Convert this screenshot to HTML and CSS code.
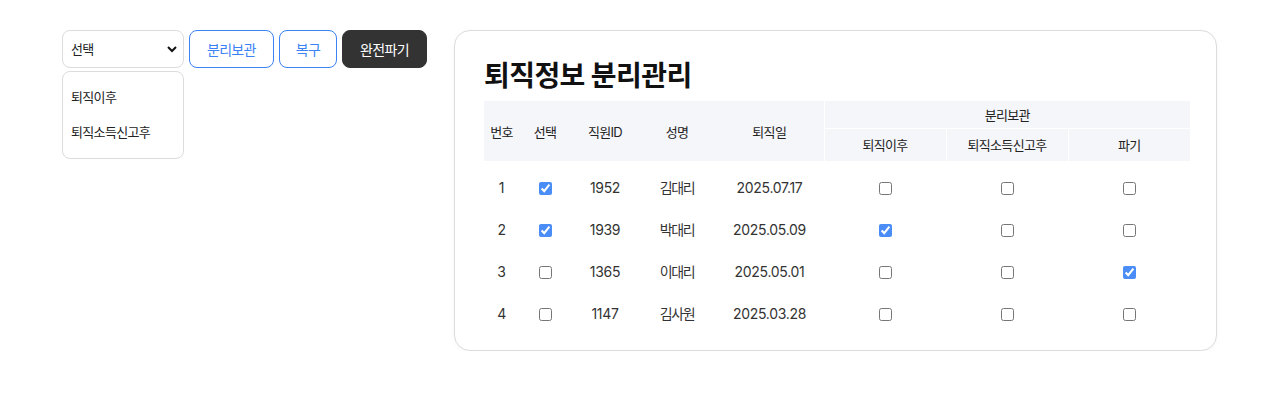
FILE: index.html
```html
<!DOCTYPE html>
<html lang="ko">
<head>
<meta charset="utf-8">
<title>퇴직정보 분리관리</title>
<link rel="stylesheet" href="styles.css">
</head>
<body>
<div class="page">
  <div class="controls">
    <div class="toolbar">
      <div class="select-wrap">
        <select class="select">
          <option>선택</option>
          <option>퇴직이후</option>
          <option>퇴직소득신고후</option>
        </select>
        <svg class="chev" width="12" height="8" viewBox="0 0 12 8"><path d="M2 2 L6 6 L10 2" fill="none" stroke="#111" stroke-width="2"/></svg>
      </div>
      <button class="btn btn-outline">분리보관</button>
      <button class="btn btn-outline btn-sm">복구</button>
      <button class="btn btn-dark">완전파기</button>
    </div>
    <ul class="menu">
      <li>퇴직이후</li>
      <li>퇴직소득신고후</li>
    </ul>
  </div>

  <div class="card">
    <h1 class="title">퇴직정보 분리관리</h1>
    <table class="tbl">
      <colgroup>
        <col style="width:35px"><col style="width:52px"><col style="width:68px"><col style="width:76px"><col style="width:109px"><col style="width:122px"><col style="width:122px"><col style="width:122px">
      </colgroup>
      <thead>
        <tr class="h1row">
          <th rowspan="2">번호</th>
          <th rowspan="2">선택</th>
          <th rowspan="2">직원ID</th>
          <th rowspan="2">성명</th>
          <th rowspan="2">퇴직일</th>
          <th colspan="3" class="grp">분리보관</th>
        </tr>
        <tr class="h2row">
          <th class="sub">퇴직이후</th>
          <th class="sub">퇴직소득신고후</th>
          <th class="sub">파기</th>
        </tr>
      </thead>
      <tbody>
        <tr>
          <td class="num">1</td>
          <td><input type="checkbox" checked></td>
          <td class="num">1952</td>
          <td>김대리</td>
          <td class="num">2025.07.17</td>
          <td><input type="checkbox"></td>
          <td><input type="checkbox"></td>
          <td><input type="checkbox"></td>
        </tr>
        <tr>
          <td class="num">2</td>
          <td><input type="checkbox" checked></td>
          <td class="num">1939</td>
          <td>박대리</td>
          <td class="num">2025.05.09</td>
          <td><input type="checkbox" checked></td>
          <td><input type="checkbox"></td>
          <td><input type="checkbox"></td>
        </tr>
        <tr>
          <td class="num">3</td>
          <td><input type="checkbox"></td>
          <td class="num">1365</td>
          <td>이대리</td>
          <td class="num">2025.05.01</td>
          <td><input type="checkbox"></td>
          <td><input type="checkbox"></td>
          <td><input type="checkbox" checked></td>
        </tr>
        <tr>
          <td class="num">4</td>
          <td><input type="checkbox"></td>
          <td class="num">1147</td>
          <td>김사원</td>
          <td class="num">2025.03.28</td>
          <td><input type="checkbox"></td>
          <td><input type="checkbox"></td>
          <td><input type="checkbox"></td>
        </tr>
      </tbody>
    </table>
  </div>
</div>
</body>
</html>
```
FILE: styles.css
```css
* { box-sizing: border-box; }
html, body { margin: 0; padding: 0; background: #fff; }
body {
  font-family: "Inter", "Noto Sans CJK KR", sans-serif;
  font-size: 13px;
  color: #222;
  letter-spacing: -0.05em;
}
.page {
  display: flex;
  align-items: flex-start;
  gap: 27px;
  padding: 30px 0 0 62px;
}
.controls { width: 365px; }
.toolbar { display: flex; gap: 5px; }
.select-wrap { position: relative; width: 122px; }
.select {
  appearance: none;
  -webkit-appearance: none;
  width: 122px;
  height: 38px;
  border: 1px solid #dcdcdc;
  border-radius: 8px;
  background: #fff;
  padding: 0 0 0 8px;
  font: inherit;
  letter-spacing: inherit;
  color: #222;
}
.chev { position: absolute; right: 6px; top: 15px; pointer-events: none; }
.btn {
  height: 38px;
  border-radius: 8px;
  font-family: inherit;
  font-size: 14px;
  letter-spacing: -0.05em;
  padding: 0 17px;
  cursor: pointer;
}
.btn-sm { padding: 0 16px; }
.btn-outline { background: #fff; border: 1px solid #3b82f6; color: #3b82f6; }
.btn-dark { background: #333; border: 1px solid #333; color: #fff; }
.menu {
  list-style: none;
  margin: 3px 0 0;
  padding: 8px 0;
  width: 122px;
  border: 1px solid #dcdcdc;
  border-radius: 8px;
  background: #fff;
}
.menu li { height: 35px; line-height: 35px; padding-left: 8px; color: #222; }

.card {
  width: 763px;
  border: 1px solid #dcdcdc;
  border-radius: 16px;
  background: #fff;
  box-shadow: 0 1px 4px rgba(0,0,0,0.04);
  padding: 28px 26px 16px 29px;
}
.title {
  margin: 0 0 8px;
  font-size: 28px;
  line-height: 34px;
  font-weight: 700;
  letter-spacing: -0.02em;
  color: #111;
}
.tbl {
  width: 706px;
  border-collapse: collapse;
  table-layout: fixed;
}
.tbl th {
  background: #f5f6fa;
  font-weight: 400;
  color: #222;
  padding: 0;
  text-align: center;
}
.tbl .h1row th { height: 27px; }
.tbl th.grp { border-left: 1px solid #fff; }
.tbl th.sub { height: 33px; border-top: 1px solid #fff; border-left: 1px solid #fff; }
.tbl td {
  height: 42px;
  padding: 0;
  text-align: center;
  vertical-align: middle;
  font-size: 14px;
  letter-spacing: -0.1em;
  color: #333;
}
.tbl tbody tr:first-child td { height: 47px; padding-top: 5px; }
.tbl td.num { letter-spacing: -0.3px; }
.tbl input[type="checkbox"] { margin: 0; accent-color: #4a8df6; vertical-align: middle; }
```
